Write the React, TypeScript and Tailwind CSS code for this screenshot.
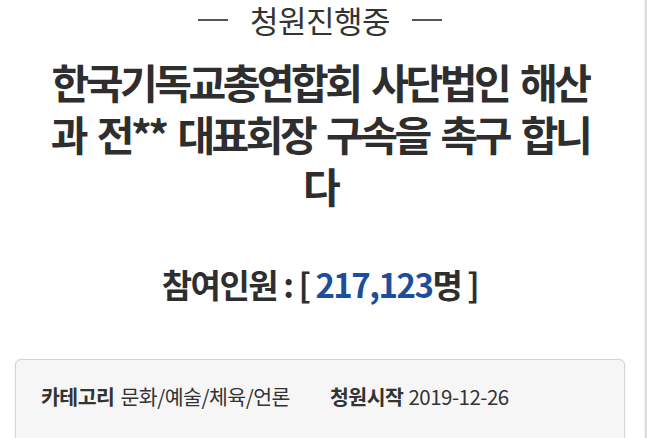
const font = "font-['Noto_Sans_CJK_KR','Noto_Sans',sans-serif]"

export default function App() {
  return (
    <div className={`${font} flex h-[438px] w-[658px] overflow-hidden bg-white text-[#2e2e2e]`}>
      <main className="w-[640px] shrink-0">
        {/* status */}
        <div className="flex h-[40px] items-center justify-center gap-[22px]">
          <span className="h-[2px] w-[30px] bg-[#555]" />
          <span className="text-[31px] leading-[40px] tracking-[-0.5px] text-[#333]">청원진행중</span>
          <span className="h-[2px] w-[30px] bg-[#555]" />
        </div>

        {/* title */}
        <h1 className="mt-[15px] text-center text-[41px] font-bold leading-[52px] tracking-[-3.5px] [word-spacing:6px]">
          한국기독교총연합회 사단법인 해산
          <br />
          과 전** 대표회장 구속을 촉구 합니
          <br />다
        </h1>

        {/* participants */}
        <p className="mt-[53px] text-center text-[33px] font-bold leading-[40px] tracking-[-1.5px]">
          참여인원 : [ <span className="text-[#1d4e9c]">217,123</span>명 ]
        </p>

        {/* info box */}
        <div className="mx-[15px] mt-[55px] h-[120px] rounded-[6px] border border-[#d4d4d4] bg-[#f6f6f6] px-[25px] pt-[24px] shadow-[0_0_2px_rgba(0,0,0,0.08)]">
          <div className="flex items-center text-[20.5px] leading-[24px] tracking-[-0.5px] text-[#333]">
            <span className="font-bold">카테고리</span>
            <span className="ml-[6px]">문화/예술/체육/언론</span>
            <span className="ml-[40px] font-bold">청원시작</span>
            <span className="ml-[5px]">2019-12-26</span>
          </div>
        </div>
      </main>
      <div className="ml-[4px] w-px shrink-0 bg-[#efefef]" />
      <div className="w-[2px] shrink-0 bg-[#dedede]" />
    </div>
  )
}
